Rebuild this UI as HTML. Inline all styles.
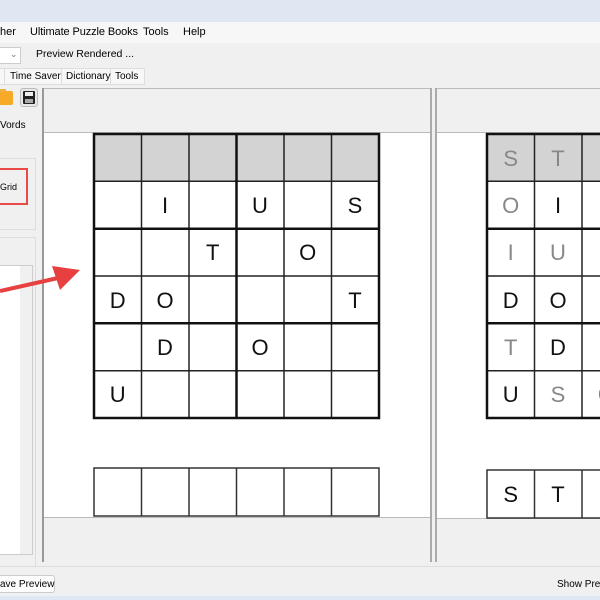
<!DOCTYPE html>
<html><head><style>
*{margin:0;padding:0;box-sizing:border-box}
body{width:600px;height:600px;overflow:hidden;background:#f0f0f0;font-family:"Liberation Sans",sans-serif;font-size:10px;color:#000;position:relative}
.a{position:absolute;white-space:nowrap}
</style></head><body>
<div class="a" style="left:0;top:0;width:600px;height:22px;background:#dfe8f2"></div>
<div class="a" style="left:0;top:22px;width:600px;height:21px;background:#f7f7f7"></div>
<div class="a" style="left:0;top:26px;font-size:11px">her</div>
<div class="a" style="left:30px;top:26px;font-size:11px;letter-spacing:-0.1px">Ultimate Puzzle Books</div>
<div class="a" style="left:143px;top:26px;font-size:11px">Tools</div>
<div class="a" style="left:183px;top:26px;font-size:11px">Help</div>
<div class="a" style="left:0;top:47px;width:21px;height:17px;background:#fff;border:1px solid #ccc;border-left:none"></div>
<div class="a" style="left:10px;top:49px;color:#777;font-size:9px">⌄</div>
<div class="a" style="left:36px;top:48px;font-size:10.5px">Preview Rendered ...</div>
<div class="a" style="left:0;top:68px;width:145px;height:17px;background:#f7f7f7;border:1px solid #ddd;border-left:none"></div>
<div class="a" style="left:4px;top:68px;width:1px;height:17px;background:#ddd"></div>
<div class="a" style="left:61px;top:68px;width:1px;height:17px;background:#ddd"></div>
<div class="a" style="left:110px;top:68px;width:1px;height:17px;background:#ddd"></div>
<div class="a" style="left:10px;top:71px">Time Saver</div>
<div class="a" style="left:66px;top:71px">Dictionary</div>
<div class="a" style="left:115px;top:71px">Tools</div>
<div class="a" style="left:0;top:91px;width:13px;height:14px;background:#f7a928;border-radius:0 2px 2px 0"></div>
<div class="a" style="left:0;top:89px;width:6px;height:3px;background:#f0b040"></div>
<div class="a" style="left:20px;top:88px;width:18px;height:19px;border:1px solid #bbb;border-radius:3px;background:#e8e8e8"></div>
<div class="a" style="left:23px;top:91px;width:12px;height:13px;background:#222;border-radius:1px"></div>
<div class="a" style="left:25px;top:92px;width:8px;height:4px;background:#eee"></div>
<div class="a" style="left:25px;top:99px;width:8px;height:4px;background:#aaa"></div>
<div class="a" style="left:0;top:120px">Vords</div>
<div class="a" style="left:0;top:158px;width:36px;height:72px;border:1px solid #ddd;border-left:none"></div>
<div class="a" style="left:0;top:168px;width:28px;height:37px;border:2px solid #e84a4a;border-left:none"></div>
<div class="a" style="left:0;top:182px;font-size:9px">Grid</div>
<div class="a" style="left:0;top:237px;width:36px;height:330px;border:1px solid #ddd;border-left:none"></div>
<div class="a" style="left:0;top:265px;width:33px;height:290px;background:#fff;border:1px solid #ccc;border-left:none"></div>
<div class="a" style="left:20px;top:266px;width:12px;height:288px;background:#f0f0f0"></div>
<div class="a" style="left:0;top:566px;width:600px;height:1px;background:#ddd"></div>
<div class="a" style="left:42px;top:88px;width:390px;height:1px;background:#bbb"></div>
<div class="a" style="left:42px;top:88px;width:2px;height:474px;background:#999"></div>
<div class="a" style="left:430px;top:88px;width:2px;height:474px;background:#aaa"></div>
<div class="a" style="left:44px;top:132px;width:386px;height:386px;background:#fff;border-top:1px solid #bbb;border-bottom:1px solid #bbb"></div>
<div class="a" style="left:435px;top:88px;width:2px;height:474px;background:#aaa"></div>
<div class="a" style="left:437px;top:88px;width:163px;height:1px;background:#bbb"></div>
<div class="a" style="left:437px;top:132px;width:163px;height:387px;background:#fff;border-top:1px solid #bbb;border-bottom:1px solid #bbb"></div>
<svg class="a" style="left:0;top:0" width="600" height="600" font-family="Liberation Sans, sans-serif" font-size="22" text-anchor="middle">
<g transform="translate(94,134)">
<rect x="0" y="0" width="285" height="47" fill="#d3d3d3"/>
<g stroke="#222" stroke-width="1.5">
<line x1="47.5" y1="0" x2="47.5" y2="284"/><line x1="95" y1="0" x2="95" y2="284"/><line x1="190" y1="0" x2="190" y2="284"/><line x1="237.5" y1="0" x2="237.5" y2="284"/>
<line x1="0" y1="47.3" x2="285" y2="47.3"/><line x1="0" y1="142" x2="285" y2="142"/><line x1="0" y1="236.7" x2="285" y2="236.7"/>
</g>
<g stroke="#111" stroke-width="2.5" fill="none">
<line x1="142.5" y1="0" x2="142.5" y2="284"/><line x1="0" y1="94.7" x2="285" y2="94.7"/><line x1="0" y1="189.3" x2="285" y2="189.3"/>
<rect x="0" y="0" width="285" height="284"/>
</g>
<g fill="#111">
<text x="71" y="79">I</text><text x="166" y="79">U</text><text x="261" y="79">S</text>
<text x="118.7" y="126">T</text><text x="213.7" y="126">O</text>
<text x="23.7" y="174">D</text><text x="71" y="174">O</text><text x="261" y="174">T</text>
<text x="71" y="221">D</text><text x="166" y="221">O</text>
<text x="23.7" y="268">U</text>
</g>
</g>
<g transform="translate(94,468)" stroke="#333" stroke-width="1.5" fill="none">
<rect x="0" y="0" width="285" height="48"/>
<line x1="47.5" y1="0" x2="47.5" y2="48"/><line x1="95" y1="0" x2="95" y2="48"/><line x1="142.5" y1="0" x2="142.5" y2="48"/><line x1="190" y1="0" x2="190" y2="48"/><line x1="237.5" y1="0" x2="237.5" y2="48"/>
</g>
<g transform="translate(487,134)">
<rect x="0" y="0" width="120" height="47" fill="#d3d3d3"/>
<g stroke="#222" stroke-width="1.5">
<line x1="47.5" y1="0" x2="47.5" y2="284"/><line x1="95" y1="0" x2="95" y2="284"/>
<line x1="0" y1="47.3" x2="120" y2="47.3"/><line x1="0" y1="142" x2="120" y2="142"/><line x1="0" y1="236.7" x2="120" y2="236.7"/>
</g>
<g stroke="#111" stroke-width="2.5" fill="none">
<line x1="0" y1="94.7" x2="120" y2="94.7"/><line x1="0" y1="189.3" x2="120" y2="189.3"/>
<path d="M120 0H0V284H120"/>
</g>
<g fill="#888">
<text x="23.7" y="32">S</text><text x="71" y="32">T</text><text x="23.7" y="79">O</text>
<text x="23.7" y="126">I</text><text x="71" y="126">U</text><text x="23.7" y="221">T</text><text x="71" y="268">S</text><text x="118.7" y="268">C</text>
</g>
<g fill="#111">
<text x="71" y="79">I</text><text x="23.7" y="174">D</text><text x="71" y="174">O</text><text x="71" y="221">D</text><text x="23.7" y="268">U</text>
</g>
</g>
<g transform="translate(487,470)">
<g stroke="#333" stroke-width="1.5" fill="none"><path d="M120 0H0V48H120"/><line x1="47.5" y1="0" x2="47.5" y2="48"/><line x1="95" y1="0" x2="95" y2="48"/></g>
<text x="23.7" y="32" fill="#111">S</text><text x="71" y="32" fill="#111">T</text>
</g>
<path d="M0 291 L58 278" stroke="#e84040" stroke-width="4"/>
<path d="M52 266 L80 270 L60 290 Z" fill="#e84040"/>
</svg>
<div class="a" style="left:0;top:575px;width:55px;height:18px;background:#fdfdfd;border:1px solid #ccc;border-left:none;border-radius:0 3px 3px 0"></div>
<div class="a" style="left:0;top:579px">ave Preview</div>
<div class="a" style="left:557px;top:579px">Show Prev</div>
<div class="a" style="left:0;top:596px;width:600px;height:4px;background:#dde8f4"></div>
</body></html>
